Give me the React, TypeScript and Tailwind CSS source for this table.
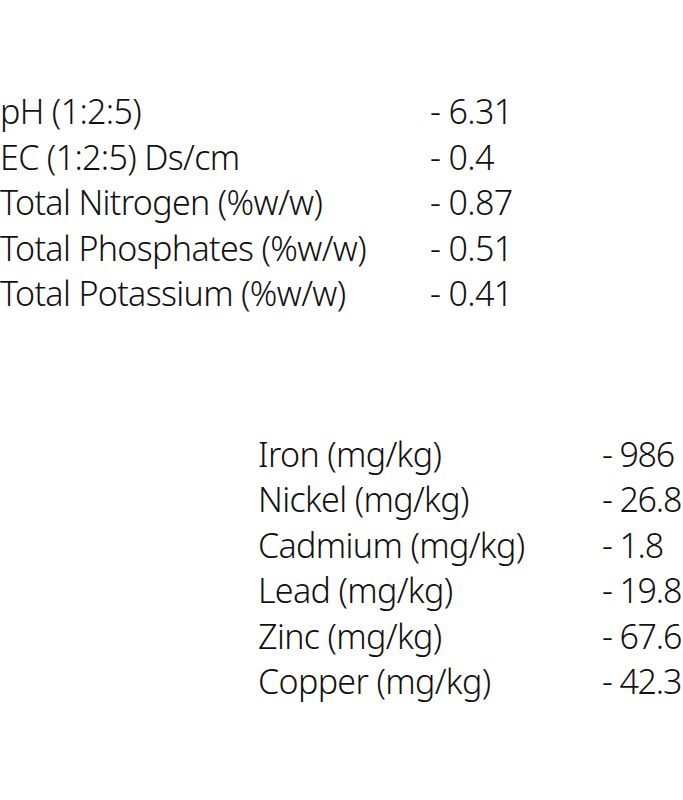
const basic = [
  ["pH (1:2:5)", "- 6.31"],
  ["EC (1:2:5) Ds/cm", "- 0.4"],
  ["Total Nitrogen (%w/w)", "- 0.87"],
  ["Total Phosphates (%w/w)", "- 0.51"],
  ["Total Potassium (%w/w)", "- 0.41"],
];

const metals = [
  ["Iron (mg/kg)", "- 986"],
  ["Nickel (mg/kg)", "- 26.8"],
  ["Cadmium (mg/kg)", "- 1.8"],
  ["Lead (mg/kg)", "- 19.8"],
  ["Zinc (mg/kg)", "- 67.6"],
  ["Copper (mg/kg)", "- 42.3"],
];

export default function App() {
  return (
    <div className="h-[800px] w-[683px] overflow-hidden bg-white font-['Noto_Sans',sans-serif] text-[34px] font-[350] leading-[45.5px] text-[#111] tracking-[-0.65px]">
      <div className="pt-[89px]">
        {basic.map(([label, value]) => (
          <div key={label} className="flex whitespace-nowrap">
            <span className="w-[430px] shrink-0">{label}</span>
            <span>{value}</span>
          </div>
        ))}
      </div>

      <div className="ml-[258px] mt-[115px]">
        {metals.map(([label, value]) => (
          <div key={label} className="flex whitespace-nowrap">
            <span className="w-[344px] shrink-0">{label}</span>
            <span className="tracking-[-1.2px]">{value}</span>
          </div>
        ))}
      </div>
    </div>
  );
}
